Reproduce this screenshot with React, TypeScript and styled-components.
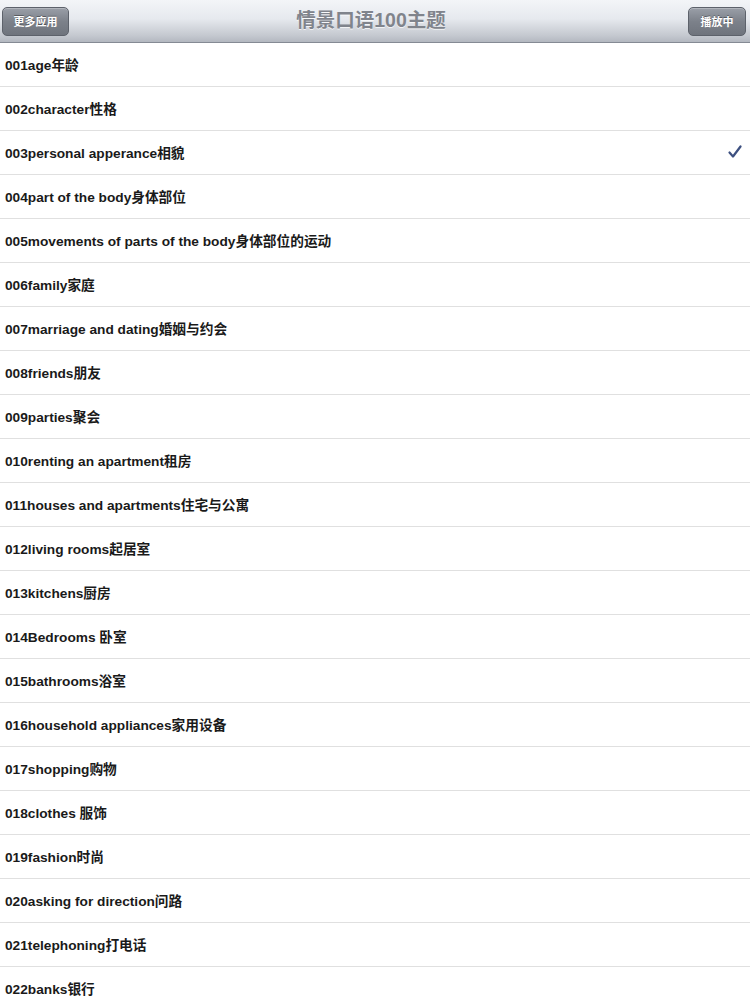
import React from "react";
import styled, { createGlobalStyle } from "styled-components";

const topics = [
  "001age年龄",
  "002character性格",
  "003personal apperance相貌",
  "004part of the body身体部位",
  "005movements of parts of the body身体部位的运动",
  "006family家庭",
  "007marriage and dating婚姻与约会",
  "008friends朋友",
  "009parties聚会",
  "010renting an apartment租房",
  "011houses and apartments住宅与公寓",
  "012living rooms起居室",
  "013kitchens厨房",
  "014Bedrooms 卧室",
  "015bathrooms浴室",
  "016household appliances家用设备",
  "017shopping购物",
  "018clothes 服饰",
  "019fashion时尚",
  "020asking for direction问路",
  "021telephoning打电话",
  "022banks银行",
];

const GlobalStyle = createGlobalStyle`
  html, body {
    margin: 0;
    padding: 0;
    background: #ffffff;
    overflow: hidden;
  }
  body {
    font-family: "Liberation Sans", "Noto Sans CJK SC", sans-serif;
  }
`;

const Page = styled.div`
  width: 750px;
  height: 1000px;
  overflow: hidden;
  background: #ffffff;
`;

const NavBar = styled.div`
  height: 42px;
  display: flex;
  align-items: center;
  justify-content: space-between;
  padding: 0 4px 0 2px;
  background: linear-gradient(#f3f5f8 0%, #e6e9ee 45%, #c4c8cf 85%, #b3b8c0 100%);
  border-bottom: 1px solid #858a94;
  position: relative;
`;

const NavButton = styled.div<{ $w: number }>`
  width: ${(p) => p.$w}px;
  height: 29px;
  box-sizing: border-box;
  border-radius: 5px;
  border: 1px solid #5d626b;
  background: linear-gradient(#9a9fa8 0%, #7c818a 50%, #6f747d 100%);
  box-shadow: inset 0 1px 0 rgba(255, 255, 255, 0.25);
  display: flex;
  align-items: center;
  justify-content: center;
  color: #ffffff;
  font-size: 11px;
  font-weight: bold;
  text-shadow: 0 -1px 0 rgba(0, 0, 0, 0.35);
`;

const Title = styled.div`
  position: absolute;
  left: 0;
  right: 8px;
  top: 0;
  height: 42px;
  line-height: 40px;
  text-align: center;
  font-size: 19.5px;
  font-weight: bold;
  color: #80848c;
  text-shadow: 0 1px 0 rgba(255, 255, 255, 0.7);
  pointer-events: none;
`;

const List = styled.div`
  display: flex;
  flex-direction: column;
`;

const Row = styled.div`
  height: 44px;
  box-sizing: border-box;
  border-bottom: 1px solid #e0e0e0;
  display: flex;
  align-items: center;
  justify-content: space-between;
  padding: 0 8px 1px 5px;
  font-size: 13.7px;
  font-weight: bold;
  color: #1a1a1a;
`;

const Check = () => (
  <svg width="14" height="14" viewBox="0 0 14 14">
    <path
      d="M1.5 7.5 L5 11.5 L12.5 1.5"
      fill="none"
      stroke="#3d5080"
      strokeWidth="2.2"
      strokeLinecap="round"
      strokeLinejoin="round"
    />
  </svg>
);

export default function App() {
  return (
    <Page>
      <GlobalStyle />
      <NavBar>
        <NavButton $w={67}>更多应用</NavButton>
        <Title>情景口语100主题</Title>
        <NavButton $w={58}>播放中</NavButton>
      </NavBar>
      <List>
        {topics.map((t, i) => (
          <Row key={t}>
            <span>{t}</span>
            {i === 2 && <Check />}
          </Row>
        ))}
      </List>
    </Page>
  );
}
